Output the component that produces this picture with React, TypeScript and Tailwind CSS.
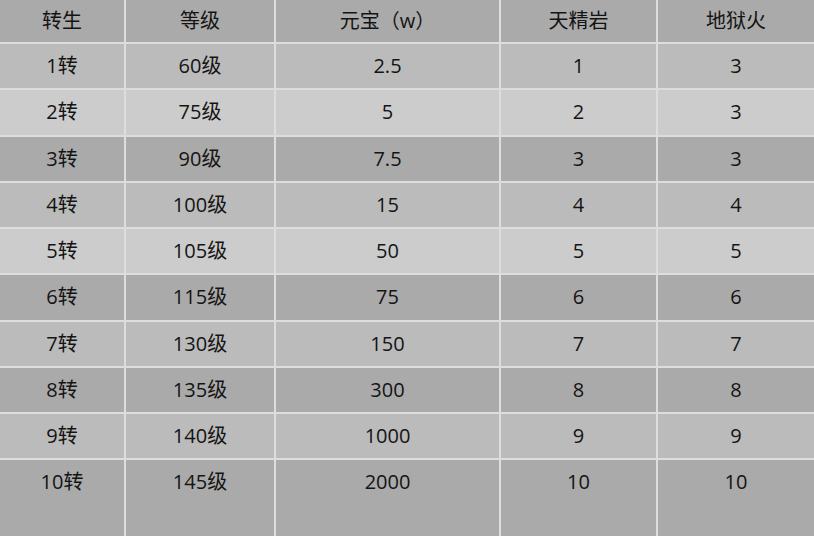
const headers = ["转生", "等级", "元宝（w）", "天精岩", "地狱火"];

const rows: { cells: string[]; bg: string }[] = [
  { cells: ["1转", "60级", "2.5", "1", "3"], bg: "bg-[#bbbbbb]" },
  { cells: ["2转", "75级", "5", "2", "3"], bg: "bg-[#cccccc]" },
  { cells: ["3转", "90级", "7.5", "3", "3"], bg: "bg-[#aaaaaa]" },
  { cells: ["4转", "100级", "15", "4", "4"], bg: "bg-[#bbbbbb]" },
  { cells: ["5转", "105级", "50", "5", "5"], bg: "bg-[#cccccc]" },
  { cells: ["6转", "115级", "75", "6", "6"], bg: "bg-[#aaaaaa]" },
  { cells: ["7转", "130级", "150", "7", "7"], bg: "bg-[#bbbbbb]" },
  { cells: ["8转", "135级", "300", "8", "8"], bg: "bg-[#aaaaaa]" },
  { cells: ["9转", "140级", "1000", "9", "9"], bg: "bg-[#bbbbbb]" },
  { cells: ["10转", "145级", "2000", "10", "10"], bg: "bg-[#aaaaaa]" },
];

export default function App() {
  return (
    <div
      className="h-[536px] w-[814px] overflow-hidden bg-[#dddddd] text-[20px] text-[#141414]"
      style={{ fontFamily: '"Open Sans", "Noto Sans CJK SC", sans-serif' }}
    >
      <div className="grid grid-cols-[124px_148px_223px_155px_1fr] gap-[2px]">
        {headers.map((h) => (
          <div key={h} className="flex h-[42px] items-center justify-center bg-[#aaaaaa]">
            {h}
          </div>
        ))}
        {rows.map((row, i) =>
          row.cells.map((c, j) => (
            <div
              key={`${i}-${j}`}
              className={`${row.bg} ${i === rows.length - 1 ? "h-[80px]" : "h-[44.25px]"}`}
            >
              <div className="flex h-[44.25px] items-center justify-center">{c}</div>
            </div>
          ))
        )}
      </div>
    </div>
  );
}
